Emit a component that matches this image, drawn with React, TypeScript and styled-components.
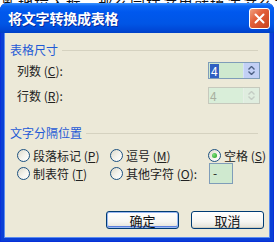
import React from 'react';
import styled, { createGlobalStyle } from 'styled-components';

const GlobalStyle = createGlobalStyle`
  html, body {
    margin: 0;
    padding: 0;
    background: #ffffff;
    overflow: hidden;
  }
`;

const font = `"Noto Sans CJK SC", "Liberation Sans", sans-serif`;

const Page = styled.div`
  width: 277px;
  height: 244px;
  overflow: hidden;
  font-family: ${font};
`;

const BehindStrip = styled.div`
  height: 3px;
  overflow: hidden;
  white-space: nowrap;
  font-size: 15px;
  line-height: 8px;
  color: #111;
  letter-spacing: 1px;
  padding-left: 2px;
`;

const Dialog = styled.div`
  width: 274px;
  height: 239px;
  display: flex;
  flex-direction: column;
  background: #0a3fd6;
  border-radius: 7px 7px 0 0;
  box-sizing: border-box;
  padding: 0 4px 4px;
  box-shadow: inset 0 0 0 1px #0831d9;
`;

const TitleBar = styled.div`
  height: 30px;
  margin: 0 -4px;
  padding: 0 4px 0 8px;
  display: flex;
  align-items: center;
  justify-content: space-between;
  border-radius: 7px 7px 0 0;
  background: linear-gradient(
    to bottom,
    #3d95ff 0%,
    #0a66f5 10%,
    #0058ee 30%,
    #0055e5 70%,
    #0049d8 88%,
    #0040c6 100%
  );
`;

const Title = styled.span`
  color: #fff;
  font-size: 14px;
  font-weight: 700;
  letter-spacing: -0.2px;
  text-shadow: 1px 1px 0 #0a2a9a;
`;

const CloseBtn = styled.div`
  width: 19px;
  height: 19px;
  border: 1px solid #fff;
  border-radius: 3px;
  display: flex;
  align-items: center;
  justify-content: center;
  background: linear-gradient(135deg, #f0a080 0%, #e3603a 40%, #c8401b 100%);
`;

const Content = styled.div`
  flex: 1;
  background: #ece9d8;
  padding: 0 10px 0 6px;
  display: flex;
  flex-direction: column;
  box-shadow: inset 1px 0 0 #5a8cf0, inset -1px 0 0 #5a8cf0, inset 0 -1px 0 #5a8cf0;
  font-size: 12px;
  color: #222;
`;

const GroupHead = styled.div<{ $top: number }>`
  display: flex;
  align-items: center;
  height: 12px;
  margin-top: ${({ $top }) => $top}px;
`;

const GroupLabel = styled.span`
  color: #1f5ad6;
  font-size: 12px;
  line-height: 12px;
`;

const GroupLine = styled.div`
  flex: 1;
  margin: 0 2px 0 4px;
  border-top: 1px solid #d5d2c0;
`;

const SpinRow = styled.div<{ $top: number }>`
  display: flex;
  align-items: center;
  justify-content: space-between;
  height: 17px;
  margin-top: ${({ $top }) => $top}px;
  padding-left: 7px;
`;

const Key = styled.span`
  text-decoration: underline;
`;

const SpinBox = styled.div<{ $disabled?: boolean }>`
  width: 52px;
  height: 17px;
  box-sizing: border-box;
  display: flex;
  border: 1px solid ${({ $disabled }) => ($disabled ? '#c6c9bd' : '#7f9db9')};
  background: ${({ $disabled }) => ($disabled ? '#d9eed9' : '#cfe9cf')};
`;

const SpinValue = styled.div<{ $disabled?: boolean }>`
  flex: 1;
  display: flex;
  align-items: center;
  padding-left: 1px;
  font-size: 12px;
  color: ${({ $disabled }) => ($disabled ? '#a8b0a0' : '#fff')};
`;

const Selected = styled.span`
  background: #2f5fc2;
  color: #fff;
  padding: 0 1px;
  line-height: 14px;
`;

const SpinButtons = styled.div<{ $disabled?: boolean }>`
  width: 15px;
  display: flex;
  flex-direction: column;
  align-items: center;
  justify-content: center;
  gap: 1px;
  background: ${({ $disabled }) => ($disabled ? '#dfeddf' : '#c2d0f5')};
  border-left: 1px solid ${({ $disabled }) => ($disabled ? '#e6efe6' : '#d4e0fb')};
`;

const RadioGrid = styled.div`
  display: grid;
  grid-template-columns: 93px 98px 1fr;
  grid-auto-rows: 18px;
  margin-top: 7px;
  padding-left: 7px;
  align-items: center;
`;

const RadioItem = styled.div`
  display: flex;
  align-items: center;
  gap: 3px;
  white-space: nowrap;
`;

const RadioCircle = styled.span<{ $checked?: boolean }>`
  width: 13px;
  height: 13px;
  box-sizing: border-box;
  border-radius: 50%;
  border: 1px solid #1c5180;
  background: linear-gradient(135deg, #dcd9cb 0%, #f5f4ee 55%, #ffffff 100%);
  display: flex;
  align-items: center;
  justify-content: center;
  &::after {
    content: '';
    display: ${({ $checked }) => ($checked ? 'block' : 'none')};
    width: 5px;
    height: 5px;
    border-radius: 50%;
    background: radial-gradient(circle at 35% 35%, #7ee07e, #1c9c1c);
  }
`;

const SmallBox = styled.div`
  width: 24px;
  height: 21px;
  box-sizing: border-box;
  border: 1px solid #7f9db9;
  background: #cfe9cf;
  font-size: 12px;
  padding-left: 3px;
  line-height: 17px;
  margin-left: 1px;
`;

const ButtonRow = styled.div`
  display: flex;
  justify-content: flex-end;
  gap: 12px;
  margin-top: 29px;
  margin-right: -4px;
`;

const Button = styled.div<{ $default?: boolean }>`
  width: 73px;
  height: 18px;
  box-sizing: border-box;
  display: flex;
  align-items: center;
  justify-content: center;
  border: 1px solid #003c74;
  border-radius: 3px;
  font-size: 13px;
  color: #111;
  background: linear-gradient(to bottom, #ffffff 0%, #f6f6f2 60%, #e3e1d6 100%);
  box-shadow: ${({ $default }) =>
    $default ? 'inset 0 0 0 1px #9ab8f1, inset 0 -1px 0 1px #5a7edc' : 'inset 0 -1px 0 #d0cec2'};
`;

const ArrowUp = ({ color }: { color: string }) => (
  <svg width="7" height="4" viewBox="0 0 7 4">
    <path d="M0.5 3.5 L3.5 0.5 L6.5 3.5" fill="none" stroke={color} strokeWidth="1.4" />
  </svg>
);

const ArrowDown = ({ color }: { color: string }) => (
  <svg width="7" height="4" viewBox="0 0 7 4">
    <path d="M0.5 0.5 L3.5 3.5 L6.5 0.5" fill="none" stroke={color} strokeWidth="1.4" />
  </svg>
);

const Spinner = ({ value, disabled }: { value: string; disabled?: boolean }) => {
  const arrow = disabled ? '#c4ccc4' : '#4d6185';
  return (
    <SpinBox $disabled={disabled}>
      <SpinValue $disabled={disabled}>{disabled ? value : <Selected>{value}</Selected>}</SpinValue>
      <SpinButtons $disabled={disabled}>
        <ArrowUp color={arrow} />
        <ArrowDown color={arrow} />
      </SpinButtons>
    </SpinBox>
  );
};

const Radio = ({
  label,
  k,
  checked,
  colon,
}: {
  label: string;
  k: string;
  checked?: boolean;
  colon?: boolean;
}) => (
  <RadioItem>
    <RadioCircle $checked={checked} />
    <span>
      {label} (<Key>{k}</Key>){colon ? ':' : ''}
    </span>
  </RadioItem>
);

export default function App() {
  return (
    <>
      <GlobalStyle />
      <Page>
        <BehindStrip>断地拉入框，那么同样这里就填达这么丰富吗</BehindStrip>
        <Dialog>
          <TitleBar>
            <Title>将文字转换成表格</Title>
            <CloseBtn>
              <svg width="11" height="11" viewBox="0 0 11 11">
                <path d="M1.5 1.5 L9.5 9.5 M9.5 1.5 L1.5 9.5" stroke="#fff" strokeWidth="2" strokeLinecap="round" />
              </svg>
            </CloseBtn>
          </TitleBar>
          <Content>
            <GroupHead $top={11}>
              <GroupLabel>表格尺寸</GroupLabel>
              <GroupLine />
            </GroupHead>
            <SpinRow $top={6}>
              <span>
                列数 (<Key>C</Key>):
              </span>
              <Spinner value="4" />
            </SpinRow>
            <SpinRow $top={8}>
              <span>
                行数 (<Key>R</Key>):
              </span>
              <Spinner value="4" disabled />
            </SpinRow>
            <GroupHead $top={23}>
              <GroupLabel>文字分隔位置</GroupLabel>
              <GroupLine />
            </GroupHead>
            <RadioGrid>
              <Radio label="段落标记" k="P" />
              <Radio label="逗号" k="M" />
              <Radio label="空格" k="S" checked />
              <Radio label="制表符" k="T" />
              <Radio label="其他字符" k="O" colon />
              <SmallBox>-</SmallBox>
            </RadioGrid>
            <ButtonRow>
              <Button $default>确定</Button>
              <Button>取消</Button>
            </ButtonRow>
          </Content>
        </Dialog>
      </Page>
    </>
  );
}
